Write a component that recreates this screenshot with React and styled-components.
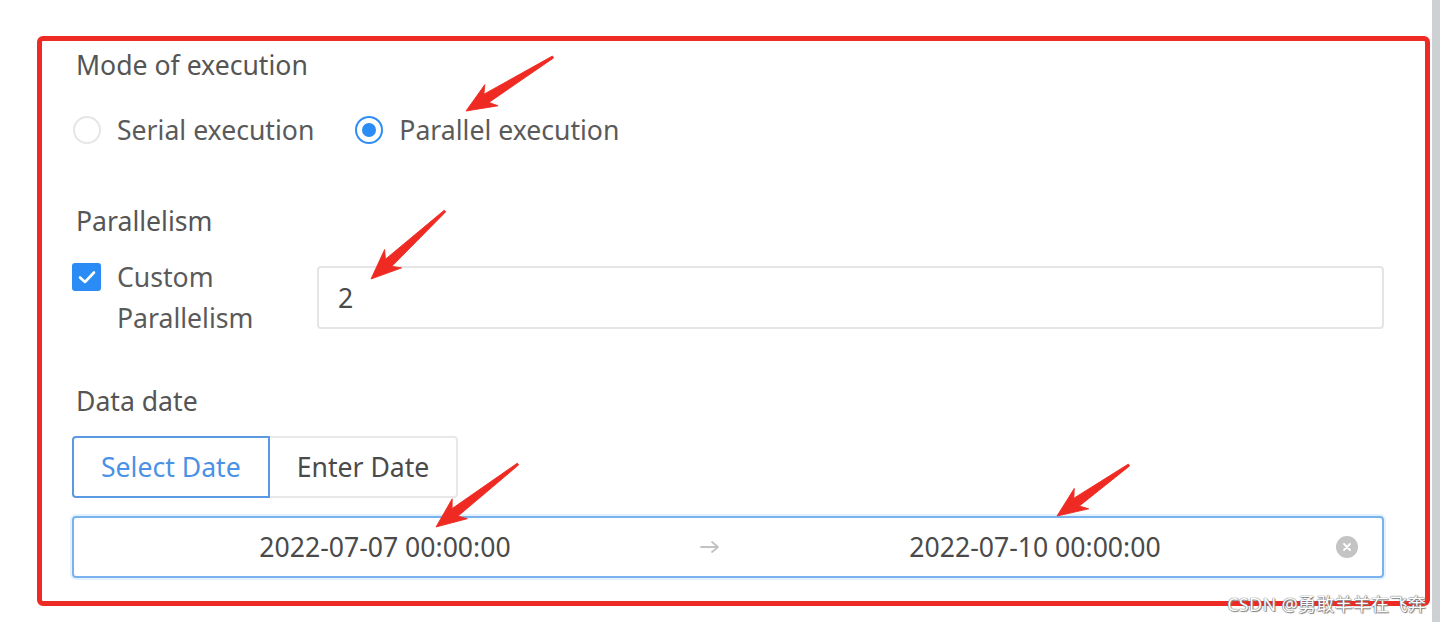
import React from "react";
import styled, { createGlobalStyle } from "styled-components";

const Global = createGlobalStyle`
  html, body { margin: 0; padding: 0; background: #fff; }
  body { font-family: "Noto Sans", "Open Sans", sans-serif; }
  * { box-sizing: border-box; }
`;

const FS = "26.6px";

const Page = styled.div`
  position: relative;
  width: 1440px;
  height: 622px;
  overflow: hidden;
  display: flex;
  background: #fff;
`;

const Main = styled.div`
  flex: 1;
  padding: 36px 2px 0 37px;
`;

const ScrollStrip = styled.div`
  width: 8px;
  background: #cdd1d4;
`;

const Frame = styled.div`
  border: 5px solid #ee2a24;
  border-radius: 6px;
  padding: 4px 41px 23px 30px;
  display: flex;
  flex-direction: column;
`;

const Label = styled.div`
  font-size: ${FS};
  line-height: 40px;
  height: 40px;
  color: #555;
  padding-left: 4px;
  margin-top: ${(p) => p.$mt || 0}px;
`;

const RadioGroup = styled.div`
  display: flex;
  align-items: center;
  gap: 40px;
  height: 40px;
  margin-top: 25px;
`;

const RadioItem = styled.label`
  display: flex;
  align-items: center;
  gap: 16px;
  font-size: ${FS};
  color: #5a5a5a;
`;

const RadioCircle = styled.span`
  width: 28px;
  height: 28px;
  border-radius: 50%;
  border: 2px solid ${(p) => (p.$checked ? "#2f8ef5" : "#e6e6e6")};
  display: flex;
  align-items: center;
  justify-content: center;
  margin-left: 1px;
  &::after {
    content: "";
    width: 14px;
    height: 14px;
    border-radius: 50%;
    background: #2a8cf4;
    display: ${(p) => (p.$checked ? "block" : "none")};
  }
`;

const CheckRow = styled.div`
  display: flex;
  align-items: flex-start;
  margin-top: 16px;
`;

const CheckLabel = styled.label`
  width: 245px;
  flex-shrink: 0;
  display: flex;
  align-items: flex-start;
  gap: 16px;
`;

const CheckBox = styled.span`
  width: 29px;
  height: 28px;
  border-radius: 3px;
  background: #2a8cf4;
  margin-top: 6px;
  flex-shrink: 0;
  display: flex;
  align-items: center;
  justify-content: center;
`;

const CheckText = styled.span`
  font-size: ${FS};
  line-height: 41px;
  color: #5a5a5a;
  width: 150px;
`;

const TextInput = styled.div`
  flex: 1;
  height: 63px;
  margin-top: 9px;
  border: 2px solid #e5e5e5;
  border-radius: 4px;
  padding-left: 19px;
  display: flex;
  align-items: center;
  font-size: ${FS};
  color: #4a4a4a;
`;

const Segmented = styled.div`
  display: flex;
  margin-top: 15px;
`;

const SegButton = styled.div`
  height: 62px;
  padding: 0 27px;
  display: flex;
  align-items: center;
  font-size: ${FS};
  color: ${(p) => (p.$active ? "#4a92e6" : "#4a4a4a")};
  border: ${(p) => (p.$active ? "2px solid #5b9ae3" : "2px solid #e8e8e8")};
  border-left-width: ${(p) => (p.$active ? "2px" : "0")};
  border-radius: ${(p) => (p.$first ? "4px 0 0 4px" : "0 4px 4px 0")};
`;

const RangeBox = styled.div`
  position: relative;
  margin-top: 18px;
  height: 62px;
  border: 2px solid #7ab2ee;
  border-radius: 4px;
  box-shadow: 0 0 0 2px rgba(24, 144, 255, 0.12);
  display: flex;
  align-items: center;
  padding-right: 36px;
  font-size: ${FS};
  color: #4a4a4a;
`;

const RangePart = styled.div`
  flex: 1;
  text-align: center;
`;

const RangeArrow = styled.div`
  width: 28px;
  display: flex;
  align-items: center;
  justify-content: center;
`;

const ClearIcon = styled.div`
  position: absolute;
  right: 24px;
  top: 50%;
  transform: translateY(-50%);
  width: 22px;
  height: 22px;
  border-radius: 50%;
  background: #c4c4c4;
  display: flex;
  align-items: center;
  justify-content: center;
`;

const Overlay = styled.svg`
  position: absolute;
  left: 0;
  top: 0;
  width: 1440px;
  height: 622px;
  pointer-events: none;
`;

const Watermark = styled.div`
  position: absolute;
  right: 14px;
  bottom: 6px;
  font-family: "Noto Sans", "Noto Sans CJK SC", sans-serif;
  font-size: 18px;
  color: #fff;
  text-shadow: 0 0 1px #666, 0 0 1px #666, 1px 1px 1px #888;
  letter-spacing: 0.3px;
`;

const arrows = [
  { x1: 553, y1: 57, x2: 466, y2: 111 },
  { x1: 445, y1: 211, x2: 371, y2: 279 },
  { x1: 518, y1: 464, x2: 436, y2: 527 },
  { x1: 1129, y1: 465, x2: 1057, y2: 516 },
];

function RedArrow({ x1, y1, x2, y2 }) {
  const dx = x2 - x1;
  const dy = y2 - y1;
  const L = Math.sqrt(dx * dx + dy * dy);
  const deg = (Math.atan2(dy, dx) * 180) / Math.PI;
  const pts = [
    [0, -1.1],
    [L - 24, -4.8],
    [L - 30, -12.5],
    [L, 0],
    [L - 30, 12.5],
    [L - 24, 4.8],
    [0, 1.1],
  ]
    .map((p) => p.join(","))
    .join(" ");
  return (
    <g transform={`translate(${x1} ${y1}) rotate(${deg})`}>
      <polygon points={pts} fill="#ef2a22" strokeLinejoin="round" stroke="#ef2a22" strokeWidth="0.8" />
    </g>
  );
}

export default function App() {
  return (
    <>
      <Global />
      <Page>
        <Main>
          <Frame>
            <Label>Mode of execution</Label>
            <RadioGroup>
              <RadioItem>
                <RadioCircle />
                Serial execution
              </RadioItem>
              <RadioItem>
                <RadioCircle $checked />
                Parallel execution
              </RadioItem>
            </RadioGroup>

            <Label $mt={51}>Parallelism</Label>
            <CheckRow>
              <CheckLabel>
                <CheckBox>
                  <svg width="18" height="14" viewBox="0 0 18 14">
                    <path d="M2 7.5 L7 12 L16 2.5" fill="none" stroke="#fff" strokeWidth="2.6" strokeLinecap="round" strokeLinejoin="round" />
                  </svg>
                </CheckBox>
                <CheckText>Custom Parallelism</CheckText>
              </CheckLabel>
              <TextInput>2</TextInput>
            </CheckRow>

            <Label $mt={42}>Data date</Label>
            <Segmented>
              <SegButton $active $first>Select Date</SegButton>
              <SegButton>Enter Date</SegButton>
            </Segmented>

            <RangeBox>
              <RangePart>2022-07-07 00:00:00</RangePart>
              <RangeArrow>
                <svg width="22" height="14" viewBox="0 0 22 14">
                  <path d="M2 7 H19 M13 2 L19 7 L13 12" fill="none" stroke="#c2c2c2" strokeWidth="1.8" strokeLinecap="round" strokeLinejoin="round" />
                </svg>
              </RangeArrow>
              <RangePart>2022-07-10 00:00:00</RangePart>
              <ClearIcon>
                <svg width="10" height="10" viewBox="0 0 10 10">
                  <path d="M2 2 L8 8 M8 2 L2 8" stroke="#fff" strokeWidth="1.8" strokeLinecap="round" />
                </svg>
              </ClearIcon>
            </RangeBox>
          </Frame>
        </Main>
        <ScrollStrip />
        <Overlay viewBox="0 0 1440 622">
          {arrows.map((a, i) => (
            <RedArrow key={i} {...a} />
          ))}
        </Overlay>
        <Watermark>CSDN @勇敢羊羊在飞奔</Watermark>
      </Page>
    </>
  );
}
